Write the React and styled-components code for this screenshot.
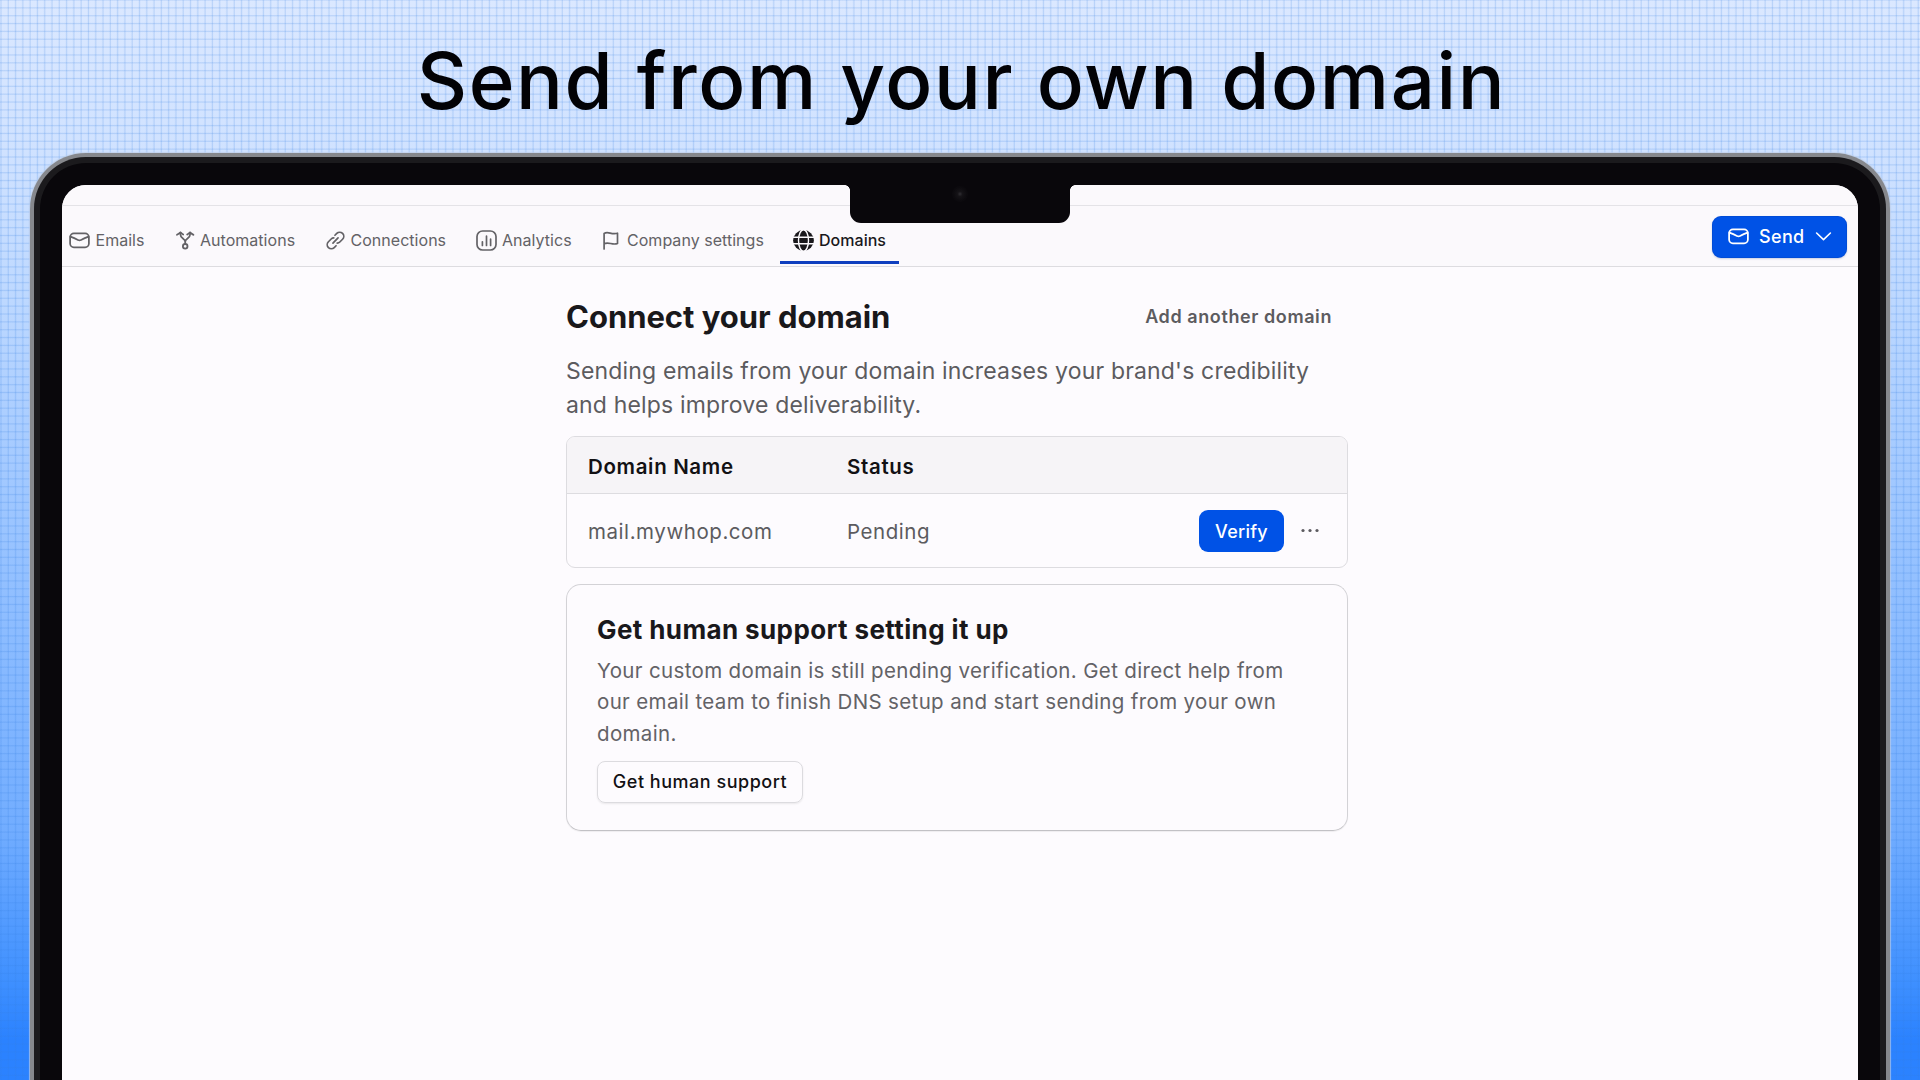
import styled, { createGlobalStyle, css } from 'styled-components';

const colors = {
  ink: '#19181b',
  text: '#5c5b5f',
  line: '#dddce0',
  surface: '#fdfbfe',
  bar: '#fbf9fc',
  head: '#f6f4f7',
  blue: '#0052e6',
  underline: '#0f3fbf',
};

const GlobalStyle = createGlobalStyle`
  * {
    box-sizing: border-box;
  }

  body {
    margin: 0;
    font-family: Inter, 'Liberation Sans', sans-serif;
    color: ${colors.ink};
  }

  h1, h2, p {
    margin: 0;
  }

  button {
    font-family: inherit;
    border: none;
    background: none;
    padding: 0;
  }

  svg {
    display: block;
    flex: none;
  }
`;

const Page = styled.main`
  display: flex;
  flex-direction: column;
  width: 1920px;
  height: 1080px;
  overflow: hidden;
  background:
    repeating-linear-gradient(
      180deg,
      rgba(50, 125, 225, 0.2) 0,
      rgba(60, 130, 235, 0) 1.2px,
      rgba(60, 130, 235, 0) 6.65px,
      rgba(50, 125, 225, 0.2) 7.85px
    ),
    repeating-linear-gradient(
      90deg,
      rgba(50, 125, 225, 0.04) 0,
      rgba(50, 125, 225, 0.2) 1px,
      rgba(60, 130, 235, 0) 2.2px,
      rgba(60, 130, 235, 0) 6.5px,
      rgba(50, 125, 225, 0.04) 7.29px
    ),
    linear-gradient(180deg, #dbe8ff 0, #d0e2ff 150px, #bdd8ff 300px, #93c0ff 580px, #72adff 830px, #3f90ff 980px, #2b82ff 1040px, #2b82ff 100%);
`;

const Banner = styled.header`
  display: flex;
  justify-content: center;
  height: 153px;
  padding: 32px 0 0 3px;
`;

const Title = styled.p`
  font-size: 78px;
  font-weight: 500;
  line-height: 97px;
  letter-spacing: 1.6px;
  color: #020205;
  white-space: nowrap;
`;

const Laptop = styled.div`
  flex: 1;
  display: flex;
  margin: 0 30px -80px;
  padding: 28px 28px 0;
  border: 4px solid #86888d;
  border-bottom: none;
  border-radius: 56px 56px 0 0;
  background: #09070b;
  box-shadow: inset 0 0 0 6px #1b1a1d, 0 0 1px 1px rgba(190, 205, 230, 0.7);
`;

const Screen = styled.div`
  position: relative;
  flex: 1;
  display: flex;
  flex-direction: column;
  overflow: hidden;
  border-radius: 24px 24px 0 0;
  background: ${colors.surface};
`;

// the camera housing lies over the app, so it is taken out of the flow
const Notch = styled.div`
  position: absolute;
  top: -1px;
  left: 788px;
  width: 220px;
  height: 39px;
  border-radius: 0 0 11px 11px;
  background: #09070b;

  &::before,
  &::after {
    content: '';
    position: absolute;
    top: 1px;
    width: 5px;
    height: 5px;
  }

  &::before {
    right: 100%;
    background: radial-gradient(circle at 0 100%, transparent 4.5px, #09070b 5px);
  }

  &::after {
    left: 100%;
    background: radial-gradient(circle at 100% 100%, transparent 4.5px, #09070b 5px);
  }
`;

const Camera = styled.div`
  width: 16px;
  height: 16px;
  margin: 2px auto 0;
  border-radius: 50%;
  background: radial-gradient(circle, #302e33 0, #151317 22%, #0c0a0e 60%, #09070b 100%);
`;

const StatusStrip = styled.div`
  height: 21px;
  border-bottom: 1px solid #e4e3e7;
  background: ${colors.bar};
`;

const NavBar = styled.nav`
  display: flex;
  align-items: stretch;
  justify-content: space-between;
  height: 61px;
  padding: 0 11px 0 0;
  border-bottom: 1px solid ${colors.line};
  background: ${colors.bar};
`;

const Tabs = styled.div`
  display: flex;
  gap: 4px;
  margin-left: -6px;
  padding-bottom: 2px;
`;

const Tab = styled.a`
  display: flex;
  align-items: center;
  gap: ${({ $gap }) => $gap}px;
  width: ${({ $width }) => $width}px;
  padding: 13px 0 0 13px;
  border-bottom: 3px solid transparent;
  font-size: 16px;
  line-height: 20px;
  letter-spacing: 0.03px;
  color: #636266;
  white-space: nowrap;

  ${({ $active }) =>
    $active &&
    css`
      border-color: ${colors.underline};
      font-weight: 500;
      color: ${colors.ink};
    `}
`;

const SendButton = styled.button`
  display: flex;
  align-items: center;
  align-self: flex-start;
  width: 135px;
  height: 42px;
  margin-top: 10px;
  padding: 0 0 2px 16px;
  border-radius: 9px;
  background: ${colors.blue};
  box-shadow: inset 0 0 0 1px rgba(0, 60, 170, 0.25), 0 1px 2px rgba(0, 40, 130, 0.2);
  font-size: 18px;
  font-weight: 500;
  letter-spacing: 0.35px;
  color: #fff;
`;

const SendLabel = styled.span`
  width: 56px;
  margin-left: 10px;
  text-align: left;
`;

const Content = styled.section`
  display: flex;
  flex-direction: column;
  width: 782px;
  margin-left: 504px;
  padding-top: 29px;
`;

const HeadingRow = styled.div`
  display: flex;
  align-items: center;
  justify-content: space-between;
  height: 42px;
`;

const Heading = styled.h1`
  font-size: 31px;
  font-weight: 700;
  line-height: 42px;
  letter-spacing: -0.03px;
`;

const GhostButton = styled.button`
  padding: 0 16px 1px 0;
  font-size: 18px;
  font-weight: 600;
  letter-spacing: 0.58px;
  color: ${colors.text};
`;

const Lead = styled.p`
  margin-top: 16px;
  font-size: 23px;
  line-height: 34px;
  letter-spacing: 0.172px;
  color: ${colors.text};
`;

const Table = styled.div`
  margin-top: 14px;
  border: 1px solid ${colors.line};
  border-radius: 9px;
  overflow: hidden;
`;

const Row = styled.div`
  display: grid;
  grid-template-columns: 259px 1fr auto;
  align-items: center;
  height: 73px;
  padding: 0 24px 0 21px;
  font-size: 20.5px;
  letter-spacing: 0.56px;
  color: ${colors.text};
`;

const HeadRow = styled(Row)`
  height: 57px;
  border-bottom: 1px solid ${colors.line};
  background: ${colors.head};
  font-weight: 600;
  letter-spacing: 0.65px;
  color: #121114;
`;

const Cell = styled.span`
  padding-top: 2px;
`;

const Actions = styled.div`
  display: flex;
  align-items: center;
  gap: 15px;
`;

const VerifyButton = styled.button`
  width: 85px;
  height: 42px;
  padding-top: 1px;
  border-radius: 9px;
  background: ${colors.blue};
  font-size: 18px;
  font-weight: 500;
  letter-spacing: 0.25px;
  color: #fff;
`;

const Card = styled.div`
  display: flex;
  flex-direction: column;
  align-items: flex-start;
  height: 247px;
  margin-top: 16px;
  padding: 29px 30px 0;
  border: 1px solid #d3d2d6;
  border-bottom-color: #c2c1c5;
  border-radius: 15px;
  box-shadow: 0 1px 1px rgba(0, 0, 0, 0.06);
`;

const CardTitle = styled.h2`
  font-size: 26px;
  font-weight: 700;
  line-height: 32px;
  letter-spacing: 0.388px;
`;

const CardText = styled.p`
  width: 710px;
  margin-top: 9px;
  font-size: 20.5px;
  line-height: 31.3px;
  letter-spacing: 0.35px;
  color: #636266;
`;

const SupportButton = styled.button`
  width: 206px;
  height: 42px;
  margin-top: 12px;
  border: 1px solid #dcdbdf;
  border-radius: 8px;
  box-shadow: 0 1px 2px rgba(0, 0, 0, 0.08);
  font-size: 18px;
  font-weight: 500;
  letter-spacing: 0.52px;
  color: #121114;
`;

const Icon = ({ children, width = 21, stroke = 1.6 }) => (
  <svg
    width={width}
    height="21"
    viewBox={`0 0 ${width} 21`}
    fill="none"
    stroke="currentColor"
    strokeWidth={stroke}
    strokeLinecap="round"
    strokeLinejoin="round"
  >
    {children}
  </svg>
);

const MailIcon = () => (
  <Icon stroke={1.75}>
    <rect x="1.1" y="3.4" width="18.8" height="13.9" rx="3.8" />
    <path d="M1.4 6.6c3.2 1.2 5.5 2.3 7.6 3.4 1 .5 2 .5 3 0 2.1-1.1 4.4-2.2 7.6-3.4" />
  </Icon>
);

const AutomationsIcon = () => (
  <Icon stroke={1.8}>
    <circle cx="10.2" cy="16.3" r="2.3" />
    <path d="M10.2 14v-2.3M5.5 2.6v2.1c0 4 4.7 3.4 4.7 7 0-3.6 4.8-3 4.8-7V2.6" />
    <path d="M2 4.7C3.1 4.1 4.6 3.6 5.5 2.4c.9.7 1.5 1.3 2.7 2.1M12.2 4.5c1.2-.8 1.9-1.4 2.8-2.1.9 1.2 2.3 1.7 3.4 2.3" />
  </Icon>
);

const LinkIcon = () => (
  <Icon stroke={1.7}>
    <g transform="rotate(-45 10.5 10.5)">
      <path d="M7.2 14.6H4.6a4.1 4.1 0 0 1 0-8.2h3.9a3.6 3.6 0 0 1 2.6 1.1" />
      <path d="M13.8 6.4h2.6a4.1 4.1 0 0 1 0 8.2h-3.9a3.6 3.6 0 0 1-2.6-1.1" />
      <path d="M6.9 10.5h7.2" />
    </g>
  </Icon>
);

const AnalyticsIcon = () => (
  <Icon stroke={1.7}>
    <rect x="1" y="1" width="19" height="19" rx="5.6" />
    <path d="M6.4 11.8v3.6M10.5 6.2v9.2M14.6 9.2v6.2" />
  </Icon>
);

const FlagIcon = () => (
  <Icon stroke={1.7}>
    <path d="M3.1 19V3.4c4.2-2.4 7.2 1.6 13.4-.2v10.3c-5.2 2-9-2.2-13.4.3" />
  </Icon>
);

const GlobeIcon = () => (
  <Icon stroke={1.4}>
    <circle cx="10.5" cy="10.5" r="10.4" fill="currentColor" stroke="none" />
    <g stroke={colors.bar}>
      <ellipse cx="10.5" cy="10.5" rx="5" ry="10.8" />
      <path d="M0 7.3h21M0 13.7h21" />
    </g>
  </Icon>
);

const ChevronIcon = () => (
  <Icon width={17}>
    <path d="m1.6 7 6.9 6.6L15.4 7" />
  </Icon>
);

const DotsIcon = () => (
  <svg width="24" height="24" viewBox="0 0 24 24" fill={colors.text}>
    <circle cx="4" cy="11.5" r="1.6" />
    <circle cx="11" cy="11.5" r="1.6" />
    <circle cx="18" cy="11.5" r="1.6" />
  </svg>
);

const tabs = [
  { label: 'Emails', icon: MailIcon, width: 102, gap: 5.5 },
  { label: 'Automations', icon: AutomationsIcon, width: 146, gap: 4 },
  { label: 'Connections', icon: LinkIcon, width: 147, gap: 4.5 },
  { label: 'Analytics', icon: AnalyticsIcon, width: 121, gap: 5 },
  { label: 'Company settings', icon: FlagIcon, width: 188, gap: 5 },
  { label: 'Domains', icon: GlobeIcon, width: 119, gap: 5, active: true },
];

function App() {
  return (
    <Page>
      <GlobalStyle />
      <Banner>
        <Title>Send from your own domain</Title>
      </Banner>
      <Laptop>
        <Screen>
          <Notch>
            <Camera />
          </Notch>
          <StatusStrip />
          <NavBar>
            <Tabs>
              {tabs.map(({ label, icon: TabIcon, width, gap, active }) => (
                <Tab key={label} $width={width} $gap={gap} $active={active}>
                  <TabIcon />
                  {label}
                </Tab>
              ))}
            </Tabs>
            <SendButton>
              <MailIcon />
              <SendLabel>Send</SendLabel>
              <ChevronIcon />
            </SendButton>
          </NavBar>
          <Content>
            <HeadingRow>
              <Heading>Connect your domain</Heading>
              <GhostButton>Add another domain</GhostButton>
            </HeadingRow>
            <Lead>
              Sending emails from your domain increases your brand's credibility and helps improve deliverability.
            </Lead>
            <Table>
              <HeadRow>
                <Cell>Domain Name</Cell>
                <Cell>Status</Cell>
              </HeadRow>
              <Row>
                <Cell>mail.mywhop.com</Cell>
                <Cell>Pending</Cell>
                <Actions>
                  <VerifyButton>Verify</VerifyButton>
                  <DotsIcon />
                </Actions>
              </Row>
            </Table>
            <Card>
              <CardTitle>Get human support setting it up</CardTitle>
              <CardText>
                Your custom domain is still pending verification. Get direct help from our email team to finish DNS
                setup and start sending from your own domain.
              </CardText>
              <SupportButton>Get human support</SupportButton>
            </Card>
          </Content>
        </Screen>
      </Laptop>
    </Page>
  );
}

export default App;
